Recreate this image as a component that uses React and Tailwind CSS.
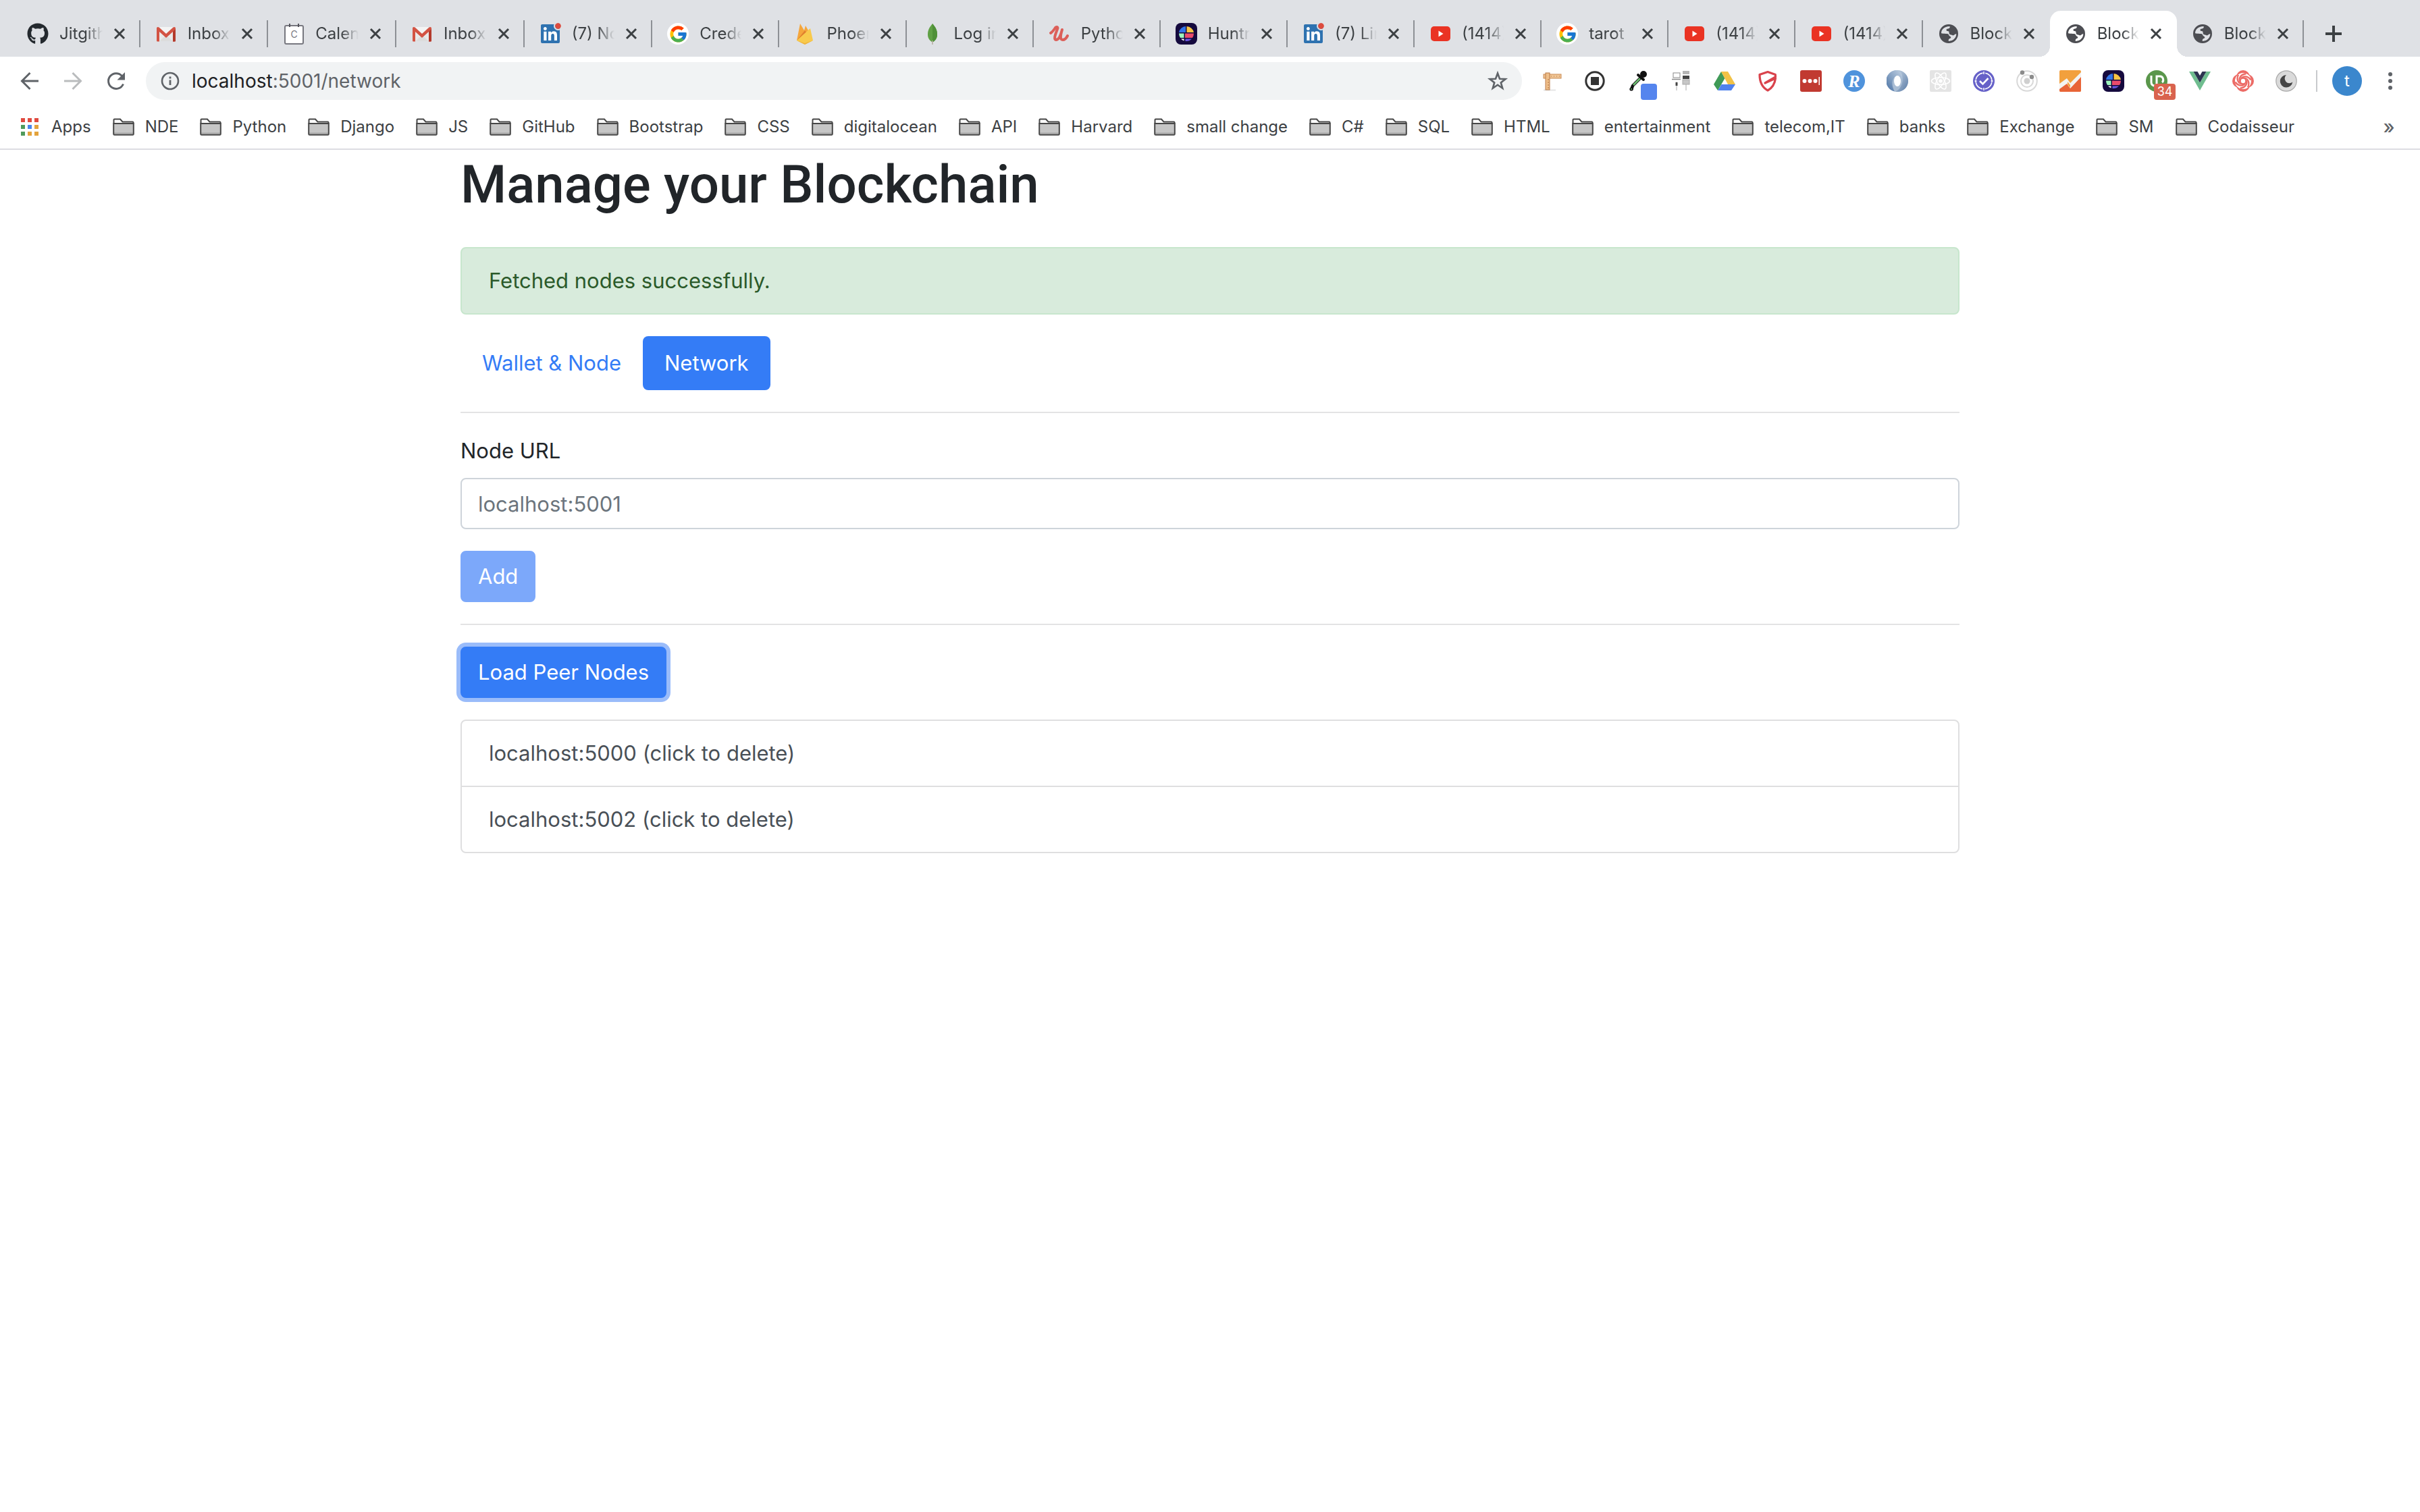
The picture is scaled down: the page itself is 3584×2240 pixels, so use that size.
import React from "react";
import { FaGithub, FaLinkedin } from "react-icons/fa";
import { FcGoogle } from "react-icons/fc";

/* ---------- favicons ---------- */

function Icon({ children, className = "size-8", box = "0 0 32 32" }) {
  return (
    <svg viewBox={box} className={`block shrink-0 ${className}`} fill="none" aria-hidden="true">
      {children}
    </svg>
  );
}

const GitHub = () => <FaGithub className="size-8 shrink-0 text-[#24292e]" />;

const Gmail = () => (
  <Icon>
    <path d="M3 7h26v20H3z" fill="#e9e9e9" />
    <path d="M6 27 16 18l10 9z" fill="#dcdcdc" />
    <path d="M6 6h20L16 16z" fill="#f4f4f4" />
    <path d="M2 8c0-2 2-3 4-1l10 9 10-9c2-2 4-1 4 1v18c0 1-.6 1.500-1.500 1.500H26V13l-10 9-10-9v14.500H3.500C2.600 27.500 2 27 2 26z" fill="#d35343" />
    <path d="M26 13l4-4v17c0 1-.6 1.500-1.500 1.500H26z" fill="#b33a2c" />
  </Icon>
);

const Calendar = () => (
  <Icon>
    <rect x="3" y="4" width="27" height="27" rx="2" fill="#fff" stroke="#77777f" strokeWidth="2" />
    <path d="M10 1v5M23 1v5" stroke="#55555d" strokeWidth="2" />
    <text x="16.500" y="22" textAnchor="middle" fontSize="14" fontFamily="Inter, sans-serif" fill="#77777f">C</text>
  </Icon>
);

const LinkedIn = () => (
  <span className="relative block size-8 shrink-0">
    <Icon className="size-8">
      <rect x="4" y="5" width="24" height="24" fill="#fff" />
    </Icon>
    <FaLinkedin className="absolute inset-0 size-8 text-[#2e72b0]" />
    <span className="absolute top-0 right-0 size-[9px] rounded-full bg-[#dc4b3e] outline-2 outline-[#dfe1e5]" />
  </span>
);

const Google = () => (
  <span className="flex size-8 shrink-0 items-center justify-center rounded-full bg-white">
    <FcGoogle className="size-[29px]" />
  </span>
);

const Firebase = () => (
  <Icon>
    <path d="M4 26 9 1l6 10 2-7 4 7-12 13z" fill="#f5a63b" />
    <path d="M4 26 16 11l3 4z" fill="#e07f2e" />
    <path d="M4 26 24 8l4 18-12 6z" fill="#f8ca4c" />
    <path d="M4 26l12 4 12-4-12 6z" fill="#eeb13c" />
  </Icon>
);

const Mongo = () => (
  <Icon>
    <path d="M16 1c5 6 7 10 7 16 0 6-3 9-6 11h-2c-3-2-6-5-6-11 0-6 2-10 7-16z" fill="#5fa044" />
    <path d="M16 1c5 6 7 10 7 16 0 6-3 9-6 11h-1z" fill="#4f9038" />
    <path d="M16 26v6" stroke="#b5ab9c" strokeWidth="1.500" />
  </Icon>
);

const Udemy = () => (
  <Icon>
    <path d="M3 15c3-2 5-5 7-8 3-2 4 0 3 2-3 8-6 15-2 16 4 0 7-7 9-15-3 10-3 15 1 15 3 0 5-2 7-6" stroke="#dc5f59" strokeWidth="4" strokeLinecap="round" strokeLinejoin="round" />
  </Icon>
);

const Huntr = () => (
  <Icon>
    <rect width="32" height="32" rx="8" fill="#150a3e" />
    <path d="M15 5v9H5a11 11 0 0 1 10-9z" fill="#3375e8" />
    <path d="M16.500 5A11 11 0 0 1 27 14H16.500z" fill="#f6c445" />
    <path d="M5 15.500h7.500V22H7a11 11 0 0 1-2-6.500z" fill="#9df5bd" />
    <path d="M14 15.500h13a11 11 0 0 1-2 6.500H14z" fill="#ea4b6c" />
    <path d="M8 23.500h4.500v2.900A11 11 0 0 1 8 23.500z" fill="#fff" />
    <path d="M14.500 23.500H24a11 11 0 0 1-9.500 3.400z" fill="#6a55e0" />
  </Icon>
);

const YouTube = () => (
  <Icon>
    <rect x="2" y="5" width="29" height="22" rx="5" fill="#ea3323" />
    <path d="M13.500 11.500v9l7-4.500z" fill="#fff" />
  </Icon>
);

const Globe = () => (
  <Icon>
    <path
      fillRule="evenodd"
      d="M16 2a14 14 0 1 0 0 28 14 14 0 1 0 0-28z M5 15.300C5 10 9 5.500 17.500 5c.6 1.400.2 2.500-1 3-1.500.6-4 .8-4 2.200 0 1.200.8 1.800 2 1.900 1.600.1 2 .5 2 1.900 0 2.500 1 3.500 3 3.500 1.500 0 1.600 1 3.100 1 1.800 0 2.400-2.200 4.700-2.200C27.300 22 23 26.600 16 27c-.6-1.400-.2-2.600.8-3.400 1-.7 2.500-.8 2.500-2 0-1.400-1.500-1.800-2.700-2.800-.6-1.700-1-2.500-3-2.700-2.500-.3-5-.1-8.600-.8z"
      fill="#4d4e53"
    />
  </Icon>
);

/* ---------- extension icons ---------- */

const Ruler = () => (
  <Icon>
    <path d="M4 29.500h18" stroke="#e4e4e4" strokeWidth="2" />
    <rect x="4" y="6" width="26" height="6" fill="#f0c594" stroke="#c98b55" />
    <rect x="7" y="4" width="6" height="25" fill="#efbf8a" stroke="#b97a48" />
    <path d="M15 9h1M19 9h1M23 9h1M27 9h1M10 14h2M10 18h2M10 22h2M10 26h2" stroke="#b0713f" />
  </Icon>
);

const Stop = () => (
  <Icon>
    <circle cx="16" cy="16" r="13.200" stroke="#333" strokeWidth="3" />
    <rect x="10" y="10" width="12" height="12" fill="#333" />
  </Icon>
);

const Dropper = () => (
  <Icon>
    <path d="M20 11 8 23l-2 6" stroke="#111" strokeWidth="4.500" strokeLinejoin="round" />
    <path d="M19 12 9 22" stroke="#6fbf73" strokeWidth="2.500" />
    <circle cx="24" cy="6" r="5" fill="#111" />
    <path d="m16 7 8 7" stroke="#111" strokeWidth="4" strokeLinecap="round" />
    <circle cx="6" cy="28" r="2.600" fill="#111" />
    <circle cx="6" cy="28" r="1" fill="#6fbf73" />
  </Icon>
);

const Devices = () => (
  <Icon>
    <rect x="4" y="4" width="10" height="7" stroke="#888" />
    <path d="M2 13.500h13" stroke="#888" strokeWidth="1.500" />
    <path d="M9 17v13" stroke="#aaa" />
    <path d="M9 18v5" stroke="#444" strokeWidth="3" />
    <rect x="18" y="1" width="10" height="5" fill="#b5b5b5" />
    <rect x="18" y="8" width="10" height="5" fill="#444" />
    <rect x="18" y="14" width="10" height="7" fill="#c6c6c6" stroke="#aaa" />
    <path d="M23 21v9" stroke="#aaa" />
  </Icon>
);

const Drive = () => (
  <Icon>
    <path d="M11 2 0 21l6 9 10.500-18z" fill="#3f9a57" />
    <path d="M11 2h10l11 19H21z" fill="#f1c247" />
    <path d="M11.500 21H32l-6 9H6z" fill="#4f82ee" />
  </Icon>
);

const Shield = () => (
  <Icon>
    <path d="M16 2.500 4 6.500C4 17 7 25 16 30c7-4 10.500-10 11.500-18L12 19l15.500-9-.2-3.500z" stroke="#d9434c" strokeWidth="3.200" strokeLinejoin="round" />
  </Icon>
);

const Password = () => (
  <Icon>
    <rect width="32" height="32" rx="3" fill="#c13a31" />
    <g fill="#fff">
      <circle cx="6.500" cy="16" r="3" />
      <circle cx="14.500" cy="16" r="3" />
      <circle cx="22.500" cy="16" r="3" />
      <rect x="27.500" y="10" width="1.500" height="12" />
    </g>
  </Icon>
);

const Rapid = () => (
  <Icon>
    <circle cx="16" cy="16" r="16" fill="#4f93dc" />
    <text x="16" y="25" textAnchor="middle" fontSize="26" fontWeight="700" fontStyle="italic" fontFamily="Liberation Serif, serif" fill="#fff">R</text>
  </Icon>
);

const Ring = () => (
  <Icon>
    <defs>
      <linearGradient id="ringA" x1="0" y1="0" x2="1" y2="1">
        <stop offset="0" stopColor="#d3deea" />
        <stop offset="1" stopColor="#3f6698" />
      </linearGradient>
      <linearGradient id="ringB" x1="0" y1="1" x2="1" y2="0">
        <stop offset="0" stopColor="#4a72a4" />
        <stop offset="1" stopColor="#c3d2e3" />
      </linearGradient>
    </defs>
    <circle cx="16" cy="16" r="16" fill="#a9bdd4" />
    <path d="M13 0a16 16 0 0 0-1 31.500C6 22 8 10 16 8c3-1 6 2 6 8 4-8 0-16-9-16z" fill="url(#ringB)" />
    <path d="M20 .5A16 16 0 0 1 12 31.500C22 30 28 12 20 .5z" fill="url(#ringA)" opacity=".75" />
    <ellipse cx="16" cy="16" rx="5" ry="8" fill="#fff" />
  </Icon>
);

const ReactLogo = () => (
  <Icon>
    <rect width="32" height="32" rx="2" fill="#e4e4e4" />
    <g stroke="#fff" strokeWidth="1.600">
      <ellipse cx="16" cy="16" rx="13.500" ry="5.200" />
      <ellipse cx="16" cy="16" rx="13.500" ry="5.200" transform="rotate(60 16 16)" />
      <ellipse cx="16" cy="16" rx="13.500" ry="5.200" transform="rotate(120 16 16)" />
    </g>
    <circle cx="16" cy="16" r="2.800" fill="#fff" />
  </Icon>
);

const Check = () => (
  <Icon>
    <circle cx="16" cy="16" r="16" fill="#6661c8" />
    <circle cx="16" cy="16" r="12" stroke="#fff" strokeWidth="1.600" strokeDasharray="15 3.850" strokeDashoffset="-1.900" />
    <path d="M16 2v4M16 26v4" stroke="#fff" strokeWidth="1.500" />
    <circle cx="4" cy="16" r="1.500" fill="#fff" />
    <circle cx="28" cy="16" r="1.500" fill="#fff" />
    <path d="m10 16 4.500 4.500 8-8.500" stroke="#fff" strokeWidth="2.600" />
  </Icon>
);

const Orbit = () => (
  <Icon>
    <circle cx="16" cy="16" r="14.800" stroke="#d8d8d8" strokeWidth="2" />
    <circle cx="16" cy="16" r="9" stroke="#d8d8d8" strokeWidth="2" />
    <circle cx="16" cy="16" r="4.500" fill="#cfcfcf" />
    <circle cx="9" cy="3.500" r="3.200" fill="#8b8b8b" />
    <circle cx="23" cy="10" r="3.200" fill="#8b8b8b" />
  </Icon>
);

const Analytics = () => (
  <Icon>
    <rect width="32" height="32" rx="2" fill="#f2a03d" />
    <path d="M0 26 11 16l5 6L32 7v23a2 2 0 0 1-2 2H2a2 2 0 0 1-2-2z" fill="#e86437" />
    <path d="M0 20 11 12l5 7L32 3v7L16 27l-5-7L0 28z" fill="#f3f3f1" />
    <path d="M12 17v4l4 5v-4z" fill="#f2a03d" />
  </Icon>
);

const Upwork = () => (
  <Icon>
    <circle cx="16" cy="16" r="16" fill="#5a964b" />
    <path d="M8 8v10c0 5 5 6 8 4V9h5c5 0 6 7 3 9" stroke="#fff" strokeWidth="3" />
  </Icon>
);

const Vue = () => (
  <Icon>
    <path d="M0 2h6.500L16 18.500 25.500 2H32L16 30z" fill="#6fbd8f" />
    <path d="M6.500 2h6L16 8l3.500-6h6L16 18.500z" fill="#2c3450" />
  </Icon>
);

const Rose = () => (
  <Icon>
    <g fill="#ec6b66">
      <circle cx="16" cy="10" r="10" />
      <circle cx="22" cy="16" r="10" />
      <circle cx="16" cy="22" r="10" />
      <circle cx="10" cy="16" r="10" />
    </g>
    <circle cx="16" cy="16" r="12" fill="#fff" />
    <g stroke="#ec6b66" strokeWidth="2.400">
      {[0, 60, 120, 180, 240, 300].map((a) => (
        <path key={a} d="M13 12.500c3-4.500 10-4.500 14.500 2" transform={`rotate(${a} 16 16)`} />
      ))}
      <circle cx="16" cy="16" r="4.200" fill="#fff" strokeWidth="2" />
    </g>
  </Icon>
);

const Moon = () => (
  <Icon>
    <circle cx="16" cy="16" r="15.200" fill="#dadada" stroke="#a9a9a9" strokeWidth="1.200" />
    <path d="M16 7a9.300 9.300 0 1 0 9.300 10.500A7 7 0 0 1 16 7z" fill="#444" />
  </Icon>
);

/* ---------- browser chrome ---------- */

const tabs = [
  { title: "Jitgith", icon: GitHub, wide: true },
  { title: "Inbox (", icon: Gmail, wide: true },
  { title: "Calend", icon: Calendar, wide: true },
  { title: "Inbox (", icon: Gmail, wide: true },
  { title: "(7) Not", icon: LinkedIn, wide: true },
  { title: "Creder", icon: Google },
  { title: "Phoen", icon: Firebase },
  { title: "Log in", icon: Mongo },
  { title: "Pytho", icon: Udemy },
  { title: "Huntr", icon: Huntr },
  { title: "(7) Lin", icon: LinkedIn },
  { title: "(1414)", icon: YouTube },
  { title: "tarot", icon: Google },
  { title: "(1414)", icon: YouTube },
  { title: "(1414)", icon: YouTube },
  { title: "Blockc", icon: Globe, last: true },
  { title: "Blockc", icon: Globe, active: true },
  { title: "Blockc", icon: Globe },
];

function Tab({ title, icon: TabIcon, wide, active, last }) {
  return (
    <li
      className={`relative flex h-[68px] min-w-0 items-center gap-4 pr-[22px] pl-[22px] ${wide ? "flex-[190]" : "flex-[188]"} ${
        active
          ? "rounded-t-2xl bg-white before:absolute before:right-full before:bottom-0 before:size-4 before:bg-[radial-gradient(circle_at_0_0,transparent_16px,white_16px)] after:absolute after:bottom-0 after:left-full after:size-4 after:bg-[radial-gradient(circle_at_100%_0,transparent_16px,white_16px)]"
          : ""
      }`}
    >
      <TabIcon />
      <span className="min-w-0 flex-1 overflow-hidden whitespace-nowrap mask-r-from-60% mask-r-to-100%">{title}</span>
      <button type="button" aria-label={`Close ${title}`} className="shrink-0">
        <Icon className="size-[18px]" box="0 0 18 18">
          <path d="m2 2 14 14M16 2 2 16" stroke="#3c4043" strokeWidth="3" />
        </Icon>
      </button>
      {!active && !last && <span className="absolute right-0 h-10 w-[2px] bg-[#8d9095]" />}
    </li>
  );
}

const extensions = [
  ["Ruler", Ruler],
  ["Recorder", Stop],
  ["Color picker", Dropper, <span className="absolute top-5 left-5 size-6 rounded bg-[#5585ee]" />],
  ["Devices", Devices],
  ["Drive", Drive],
  ["Shield", Shield],
  ["Passwords", Password],
  ["Rapid", Rapid],
  ["Ring", Ring],
  ["React", ReactLogo],
  ["Check", Check],
  ["Orbit", Orbit],
  ["Analytics", Analytics],
  ["Huntr", Huntr],
  [
    "Upwork",
    Upwork,
    <span className="absolute top-5 left-3 flex h-6 w-8 items-center justify-center rounded bg-[#d9634e] text-[18px] leading-6 text-white">34</span>,
  ],
  ["Vue", Vue],
  ["Rose", Rose],
  ["Dark mode", Moon],
];

const bookmarks = [
  "NDE", "Python", "Django", "JS", "GitHub", "Bootstrap", "CSS", "digitalocean", "API", "Harvard", "small change",
  "C#", "SQL", "HTML", "entertainment", "telecom,IT", "banks", "Exchange", "SM", "Codaisseur",
];

const Folder = () => (
  <Icon className="h-[26px] w-8" box="0 0 32 26">
    <path d="M1.500 8V2.500c0-.6.400-1 1-1h8.500l3.500 4h15c.6 0 1 .4 1 1V8" stroke="#474747" strokeWidth="2" />
    <path d="M1 8h30v15.500c0 .8-.7 1.500-1.500 1.500h-27C1.700 25 1 24.300 1 23.500z" fill="#c6c6c6" />
    <path d="M2 21.500h28v2H2z" fill="#a9a9a9" />
    <path d="M1.200 8h29.600v15.500c0 .8-.6 1.300-1.300 1.300h-27c-.7 0-1.300-.5-1.300-1.300z" stroke="#474747" strokeWidth="2" />
  </Icon>
);

const appDots = ["#e04a3f", "#e04a3f", "#e04a3f", "#4f9a5b", "#4a86ec", "#e3a33c", "#4f9a5b", "#e3a33c", "#e3a33c"];

function BrowserChrome() {
  return (
    <header className="text-[24px] text-[#3c4043]">
      <nav aria-label="Tabs" className="flex h-[84px] items-end bg-[#dfe1e5] pl-[18px]">
        <ul className="flex min-w-0 flex-1">
          {tabs.map((t, i) => (
            <Tab key={i} {...t} />
          ))}
        </ul>
        <div className="flex h-[68px] w-[172px] items-center pl-8">
          <button type="button" aria-label="New tab">
            <Icon className="size-6" box="0 0 24 24">
              <path d="M12 0v24M0 12h24" stroke="#3c4043" strokeWidth="4" />
            </Icon>
          </button>
        </div>
      </nav>

      <div className="flex h-[72px] items-center bg-white px-7">
        <div className="mr-7 flex gap-8">
          <button type="button" aria-label="Back">
            <Icon>
              <path d="M29 16H5M16.500 4 4.500 16l12 12" stroke="#5f6368" strokeWidth="3" />
            </Icon>
          </button>
          <button type="button" aria-label="Forward">
            <Icon>
              <path d="M3 16h24M15.500 4l12 12-12 12" stroke="#babcbe" strokeWidth="3" />
            </Icon>
          </button>
          <button type="button" aria-label="Reload">
            <Icon>
              <path d="M26.500 20.500A11.400 11.400 0 1 1 24.500 8.500" stroke="#5f6368" strokeWidth="3" />
              <path d="M29 3v11.500H17.500z" fill="#5f6368" />
            </Icon>
          </button>
        </div>
        <div className="flex h-14 min-w-0 flex-1 items-center rounded-full bg-[#f1f3f4] pr-5 pl-5">
          <Icon>
            <circle cx="16" cy="16" r="12" stroke="#5f6368" strokeWidth="2.600" />
            <path d="M16 14.500V22M16 9.500v3" stroke="#5f6368" strokeWidth="2.800" />
          </Icon>
          <p className="ml-4 flex-1 text-[28px] text-[#5f6368]">
            <span className="text-[#202124]">localhost</span>:5001/network
          </p>
          <button type="button" aria-label="Bookmark this page">
            <Icon>
              <path d="m16 4.500 3 8.300 8.500.3-6.700 5.300 2.400 8.300L16 21.800l-7.200 4.900 2.400-8.300-6.700-5.300 8.500-.3z" stroke="#5f6368" strokeWidth="2.600" />
            </Icon>
          </button>
        </div>
        <div className="ml-7 flex gap-8">
          {extensions.map(([name, Glyph, badge]) => (
            <button key={name} type="button" aria-label={name} className="relative">
              <Glyph />
              {badge}
            </button>
          ))}
        </div>
        <span className="mr-[22px] ml-7 h-8 w-[2px] bg-[#c8cacd]" />
        <button type="button" aria-label="Profile" className="flex size-11 items-center justify-center rounded-full bg-[#3b87cd] text-white">
          t
        </button>
        <button type="button" aria-label="Menu" className="ml-[26px]">
          <Icon>
            <g fill="#5f6368">
              <circle cx="16" cy="6" r="3" />
              <circle cx="16" cy="16" r="3" />
              <circle cx="16" cy="26" r="3" />
            </g>
          </Icon>
        </button>
      </div>

      <nav aria-label="Bookmarks" className="flex h-[66px] items-center gap-8 border-b-2 border-[#dcdce2] bg-white px-7 whitespace-nowrap">
        <a href="#apps" className="flex items-center gap-4">
          <Icon>
            {appDots.map((c, i) => (
              <rect key={i} x={3 + (i % 3) * 10} y={3 + Math.floor(i / 3) * 10} width="6" height="6" fill={c} />
            ))}
          </Icon>
          Apps
        </a>
        {bookmarks.map((b) => (
          <a key={b} href="#bookmark" className="flex items-center gap-4">
            <Folder />
            {b}
          </a>
        ))}
        <button type="button" aria-label="More bookmarks" className="ml-auto w-9 text-[28px] font-medium text-[#5f6368]">
          »
        </button>
      </nav>
    </header>
  );
}

/* ---------- page ---------- */

const nodes = ["localhost:5000", "localhost:5002"];

export default function App() {
  return (
    <div className="min-h-screen bg-white font-['Inter',sans-serif]">
      <BrowserChrome />
      <main className="mx-auto max-w-[2280px] px-[30px] text-[31px] leading-[48px] text-[#212529]">
        <h1 className="mb-11 pt-1 font-['Roboto',sans-serif] text-[78px] leading-[96px] font-medium">Manage your Blockchain</h1>

        <div role="alert" className="mb-8 rounded-lg border-2 border-[#c7e6cd] bg-[#d8ebdc] px-10 py-6 text-[#2b5a2a]">
          Fetched nodes successfully.
        </div>

        <nav aria-label="Sections" className="flex">
          <a href="#wallet" className="rounded-lg px-8 py-4 text-[#347cf6]">
            Wallet &amp; Node
          </a>
          <a href="#network" aria-current="page" className="rounded-lg bg-[#347cf6] px-8 py-4 text-white">
            Network
          </a>
        </nav>

        <hr className="my-8 border-t-2 border-[#e3e3e4]" />

        <form onSubmit={(e) => e.preventDefault()}>
          <label htmlFor="node-url" className="mb-4 block">
            Node URL
          </label>
          <input
            id="node-url"
            type="text"
            placeholder="localhost:5001"
            className="mb-8 block h-[76px] w-full rounded-lg border-2 border-[#ced4da] px-6 text-[#495057] placeholder:text-[#6c757d]"
          />
          <button type="submit" disabled className="block rounded-lg border-2 border-[#7ca8fa] bg-[#7ca8fa] px-6 py-3 text-white">
            Add
          </button>
        </form>

        <hr className="my-8 border-t-2 border-[#e3e3e4]" />

        <button type="button" className="mb-8 block rounded-lg border-2 border-[#347cf6] bg-[#347cf6] px-6 py-3 text-white ring-6 ring-[#9abcfa]">
          Load Peer Nodes
        </button>

        <ul className="divide-y-2 divide-[#dfdfe0] rounded-lg border-2 border-[#dfdfe0]">
          {nodes.map((n) => (
            <li key={n}>
              <button type="button" className="block w-full px-10 py-6 text-left text-[#495057]">
                {n} (click to delete)
              </button>
            </li>
          ))}
        </ul>
      </main>
    </div>
  );
}
